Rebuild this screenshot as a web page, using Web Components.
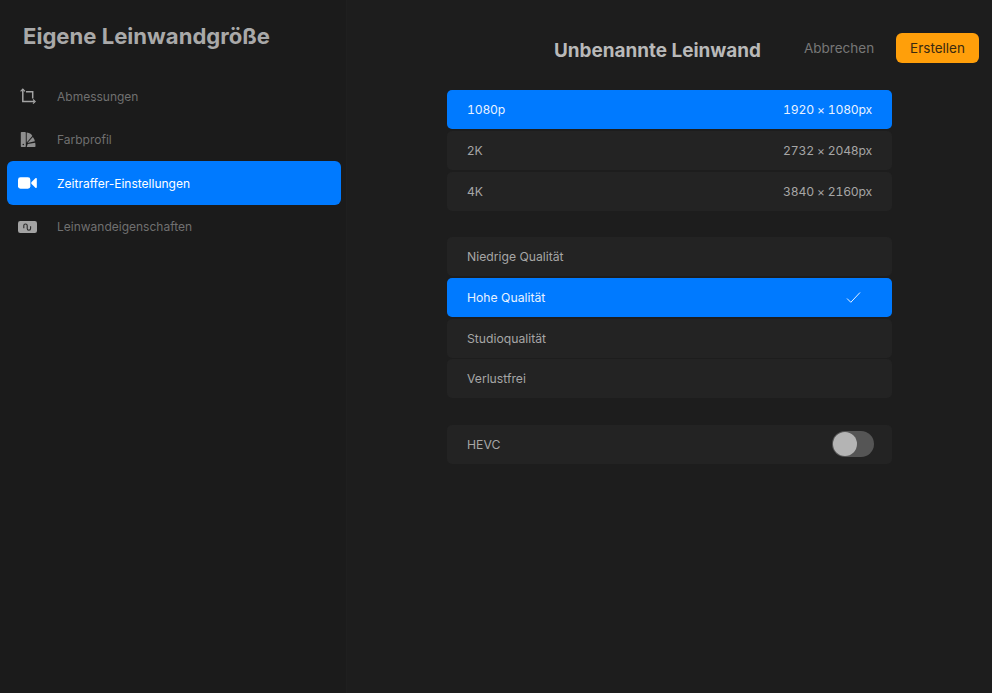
<!DOCTYPE html>
<html lang="de"><head><meta charset="utf-8"><title>Eigene Leinwandgröße</title>
<style>
html,body{margin:0;height:100%;background:#1c1c1c}
body{font-family:Inter,"Liberation Sans",sans-serif;overflow:hidden}
</style></head><body>
<canvas-app>
  <canvas-sidebar slot="side" heading="Eigene Leinwandgröße">
    <nav-item icon="crop">Abmessungen</nav-item>
    <nav-item icon="fan">Farbprofil</nav-item>
    <nav-item icon="video" active>Zeitraffer-Einstellungen</nav-item>
    <nav-item icon="wave">Leinwandeigenschaften</nav-item>
  </canvas-sidebar>
  <canvas-header slot="head" heading="Unbenannte Leinwand"></canvas-header>
  <option-group slot="main">
    <option-row active><span class="n">1080p</span><span class="n" slot="end">1920 × 1080px</span></option-row>
    <option-row><span>2K</span><span class="n" slot="end">2732 × 2048px</span></option-row>
    <option-row><span>4K</span><span class="n" slot="end">3840 × 2160px</span></option-row>
  </option-group>
  <option-group slot="main">
    <option-row><span>Niedrige Qualität</span></option-row>
    <option-row active><span>Hohe Qualität</span><check-mark slot="end"></check-mark></option-row>
    <option-row><span>Studioqualität</span></option-row>
    <option-row><span>Verlustfrei</span></option-row>
  </option-group>
  <option-group slot="main">
    <option-row><span>HEVC</span><toggle-switch slot="end"></toggle-switch></option-row>
  </option-group>
</canvas-app>
<script>
function def(name, html, setup){
  customElements.define(name, class extends HTMLElement{
    constructor(){super();this.attachShadow({mode:'open'}).innerHTML=html;}
    connectedCallback(){if(setup)setup(this,this.shadowRoot);}
  });
}
def('canvas-app',`<style>
:host{display:grid;grid-template-columns:347px 1fr;height:693px;background:#1c1c1c}
.side{background:#1b1b1b;border-right:1px solid #1f1f1f}
.right{display:flex;flex-direction:column;background:#1d1d1d}
.main{display:flex;flex-direction:column;gap:26.5px;padding:0 0 0 100px}
</style>
<div class="side"><slot name="side"></slot></div>
<div class="right"><slot name="head"></slot><div class="main"><slot name="main"></slot></div></div>`);
def('canvas-sidebar',`<style>
:host{display:block;padding:22px 6px 0 7px}
h1{margin:0 0 25px 16px;font:700 22.1px/28px Inter,"Liberation Sans",sans-serif;color:#a9a9a9;white-space:nowrap}
.list{display:flex;flex-direction:column}
</style><h1></h1><div class="list"><slot></slot></div>`,(el,s)=>{s.querySelector('h1').textContent=el.getAttribute('heading')});
const icons={
crop:`<svg viewBox="0 0 18 18" width="18" height="18" fill="none" stroke="#a4a4a4" stroke-width="1.5"><path d="M3.800 1v12.500h11.500"/><path d="M7 3.700h6.700v6.800"/><path d="M1.600 3.300 3.800 1l2.200 2.300" stroke-width="1.100"/><path d="M14 11.500 16.200 13.500 14 15.700" stroke-width="1.100"/></svg>`,
fan:`<svg viewBox="0 0 18 18" width="18" height="18" fill="#8f8f8f"><rect x="1.800" y="1" width="5" height="15" rx=".8"/><path d="M7.700 1.500c3.300.4 5 1.900 5.600 3.500L7.700 11.500Z"/><path d="M8.300 12 13.900 6c1 1.300 1.700 2.900 2 4.300Z"/><path d="M8.700 13l7.500-1.300c.2 1 .3 2.100.3 3.500a.8.8 0 0 1-.8.800H7.700Z"/><circle cx="4.300" cy="13.500" r=".8" fill="#1c1c1c"/></svg>`,
video:`<svg viewBox="0 0 20 12" width="19" height="12" fill="#fff"><rect x="0" y="0" width="13" height="12" rx="2.600"/><path d="M14 5.200 18.600.8c.5-.4 1.200-.1 1.200.6v9.200c0 .7-.7 1-1.200.6L14 6.800Z"/></svg>`,
wave:`<svg viewBox="0 0 19 12" width="19" height="12"><rect width="19" height="12" rx="2.200" fill="#a3a3a3"/><path d="M5.800 7.200V4.600c0-2.200 3.400-2.200 3.400 0v3c0 2.200 3.400 2.200 3.400 0V5.300" fill="none" stroke="#2a2a2a" stroke-width="1.100"/></svg>`};
def('nav-item',`<style>
:host{display:flex;align-items:center;height:43.3px;box-sizing:border-box;border-radius:6px;color:#707070;font-size:12px}
:host([active]){background:#007aff;color:#fff;height:44px;margin:-.35px -1px -.35px 0}
.i{width:50px;display:flex;justify-content:center}
.i svg{display:block;margin-left:-9px}
</style><span class="i"></span><slot></slot>`,(el,s)=>{s.querySelector('.i').innerHTML=icons[el.getAttribute('icon')]});
def('canvas-header',`<style>
:host{display:block;height:90px;box-sizing:border-box;padding:33px 13px 0 207px}
.r{display:flex;align-items:flex-start}
h2{margin:0;font:700 18.9px/35px Inter,"Liberation Sans",sans-serif;color:#b9b9b9;white-space:nowrap;width:250px}
.c{font-size:13.500px;line-height:30px;color:#777;width:92px;white-space:nowrap}
.b{width:83px;height:30px;background:#ff9f0a;color:#3a2a10;border-radius:6px;font-size:13.500px;line-height:30px;text-align:center}
</style><div class="r"><h2></h2><span class="c">Abbrechen</span><span class="b">Erstellen</span></div>`,(el,s)=>{s.querySelector('h2').textContent=el.getAttribute('heading')});
def('option-group',`<style>
:host{display:flex;flex-direction:column;gap:1.75px;width:445px}
</style><slot></slot>`);
def('option-row',`<style>
:host{display:flex;align-items:center;justify-content:space-between;height:39px;box-sizing:border-box;padding:0 20px;background:#232323;border-radius:5px;color:#a6a6a6;font-size:12.2px}
:host([active]){background:#007aff;color:#e8f2ff}
::slotted(.n){font-variant-numeric:tabular-nums;letter-spacing:-.2px}
</style><slot></slot><slot name="end"></slot>`);
def('check-mark',`<style>:host{display:block;margin-right:11px;height:13px}svg{display:block}</style>
<svg width="15" height="13" viewBox="0 0 15 13" fill="none" stroke="#e8f2ff" stroke-width="1"><path d="M1 7.500 4.800 11.300 14 1.500"/></svg>`);
def('toggle-switch',`<style>
:host{display:block;width:42px;height:26px;background:#555;border-radius:13px;position:relative;margin-right:-2px}
i{position:absolute;left:1px;top:1px;width:24px;height:24px;border-radius:50%;background:#b4b4b4}
</style><i></i>`);
</script></body></html>
